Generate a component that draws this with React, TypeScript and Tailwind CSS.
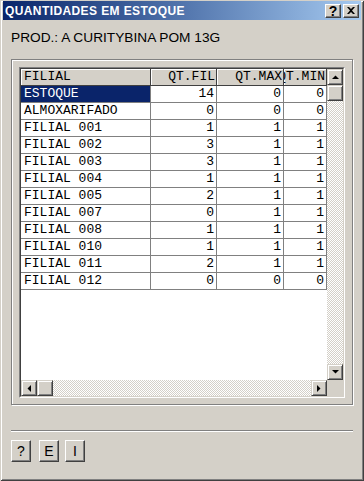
const rows: [string, number, number, number][] = [
  ["ESTOQUE", 14, 0, 0],
  ["ALMOXARIFADO", 0, 0, 0],
  ["FILIAL 001", 1, 1, 1],
  ["FILIAL 002", 3, 1, 1],
  ["FILIAL 003", 3, 1, 1],
  ["FILIAL 004", 1, 1, 1],
  ["FILIAL 005", 2, 1, 1],
  ["FILIAL 007", 0, 1, 1],
  ["FILIAL 008", 1, 1, 1],
  ["FILIAL 010", 1, 1, 1],
  ["FILIAL 011", 2, 1, 1],
  ["FILIAL 012", 0, 0, 0],
]

const raised =
  "bg-[#d4d0c8] border border-t-[#d4d0c8] border-l-[#d4d0c8] border-r-[#404040] border-b-[#404040] shadow-[inset_1px_1px_0_#fff,inset_-1px_-1px_0_#808080]"

const pushButton =
  "bg-[#d4d0c8] border border-t-white border-l-white border-r-[#404040] border-b-[#404040] shadow-[inset_-1px_-1px_0_#808080] flex items-center justify-center text-[14px] text-black"

const track = "bg-[repeating-conic-gradient(#d4d0c8_0_25%,#ffffff_0_50%)] bg-[length:2px_2px]"

function Arrow({ dir }: { dir: "up" | "down" | "left" | "right" }) {
  const pts = {
    up: "0,4 7,4 3.5,0.5",
    down: "0,0 7,0 3.5,3.5",
    left: "4,0 4,7 0.5,3.5",
    right: "0,0 0,7 3.5,3.5",
  }[dir]
  const vertical = dir === "up" || dir === "down"
  return (
    <svg width={ vertical ? 7 : 4 } height={ vertical ? 4 : 7 } viewBox={ vertical ? "0 0 7 4" : "0 0 4 7" }>
      <polygon points={ pts } fill="#000" />
    </svg>
  )
}

function ScrollBtn({ dir }: { dir: "up" | "down" | "left" | "right" }) {
  return (
    <div className={ `${ raised } w-4 h-4 shrink-0 flex items-center justify-center` }>
      <Arrow dir={ dir } />
    </div>
  )
}

export default function App() {
  return (
    <div className="w-[364px] h-[481px] bg-[#d4d0c8] pt-[1px] px-[3px] pb-[3px] flex flex-col font-['Liberation_Sans',Arial,sans-serif] shadow-[inset_1px_1px_0_#d4d0c8,inset_-1px_-1px_0_#404040,inset_2px_2px_0_#fff,inset_-2px_-2px_0_#808080]">
      {/* title bar */ }
      <div className="h-[19px] shrink-0 flex items-center bg-linear-to-r from-[#0a246a] to-[#a6caf0] pl-[2px] pr-[2px]">
        <span className="text-white font-bold text-[12px] tracking-[0.4px] leading-none">QUANTIDADES EM ESTOQUE</span>
        <div className="ml-auto flex gap-[2px]">
          <div className={ `${ pushButton } w-4 h-[14px] text-[11px] font-bold leading-none` }>?</div>
          <div className={ `${ pushButton } w-4 h-[14px]` }>
            <svg width="8" height="7" viewBox="0 0 8 7">
              <path d="M0 0h2l2 2 2-2h2L5 3.5 8 7H6L4 5 2 7H0l3-3.5z" fill="#000" />
            </svg>
          </div>
        </div>
      </div>

      <div className="mt-[10px] ml-[8px] text-[13.7px] leading-[16px] text-black">PROD.: A CURITYBINA POM 13G</div>

      {/* group box */ }
      <div className="mt-[13px] ml-[8px] w-[342px] h-[346px] border border-[#808080] shadow-[1px_1px_0_#fff,inset_1px_1px_0_#fff] pt-[7px] pl-[7px]">
        <div className="w-[326px] h-[331px] border border-t-[#808080] border-l-[#808080] border-r-white border-b-white">
          <div className="w-full h-full border border-t-[#404040] border-l-[#404040] border-r-[#d4d0c8] border-b-[#d4d0c8] flex flex-col font-['Liberation_Mono','Courier_New',monospace] text-[13px] leading-[16px] text-black">
            <div className="flex h-[311px]">
              <div className="w-[306px] bg-white flex flex-col overflow-hidden">
                <div className="flex h-[17px] shrink-0">
                  <div className="w-[130px] bg-[#d4d0c8] border-r border-b border-[#404040] shadow-[inset_1px_1px_0_#fff] pl-[3px] overflow-hidden whitespace-nowrap">FILIAL</div>
                  <div className="w-[66px] bg-[#d4d0c8] border-r border-b border-[#404040] shadow-[inset_1px_1px_0_#fff] pr-[1px] flex justify-end overflow-hidden whitespace-nowrap">QT.FIL</div>
                  <div className="w-[67px] bg-[#d4d0c8] border-r border-b border-[#404040] shadow-[inset_1px_1px_0_#fff] pr-[1px] flex justify-end overflow-hidden whitespace-nowrap">QT.MAX</div>
                  <div className="w-[43px] bg-[#d4d0c8] border-r border-b border-[#404040] shadow-[inset_1px_1px_0_#fff] pr-[1px] flex justify-end overflow-hidden whitespace-nowrap">QT.MIN</div>
                </div>
                { rows.map(([name, fil, max, min], i) => (
                  <div key={ name } className="flex h-[17px] shrink-0">
                    <div className={ `w-[130px] border-r border-b border-[#808080] pl-[3px] whitespace-nowrap ${ i === 0 ? "bg-[#0a246a] text-white" : "" }` }>{ name }</div>
                    <div className="w-[66px] border-r border-b border-[#808080] pr-[2px] text-right">{ fil }</div>
                    <div className="w-[67px] border-r border-b border-[#808080] pr-[2px] text-right">{ max }</div>
                    <div className="w-[43px] border-r border-b border-[#808080] pr-[2px] text-right">{ min }</div>
                  </div>
                )) }
              </div>
              <div className="w-4 flex flex-col">
                <ScrollBtn dir="up" />
                <div className={ `${ raised } w-4 h-4 shrink-0` } />
                <div className={ `flex-1 ${ track }` } />
                <ScrollBtn dir="down" />
              </div>
            </div>
            <div className="flex h-4">
              <div className="w-[306px] flex">
                <ScrollBtn dir="left" />
                <div className={ `${ raised } w-4 h-4 shrink-0` } />
                <div className={ `flex-1 ${ track }` } />
                <ScrollBtn dir="right" />
              </div>
              <div className="w-4 bg-[#d4d0c8]" />
            </div>
          </div>
        </div>
      </div>

      {/* separator */ }
      <div className="mt-[25px] ml-[8px] w-[342px] border-t border-[#808080] border-b border-b-white" />

      <div className="mt-[8px] ml-[8px] flex">
        <div className={ `${ pushButton } w-5 h-[22px]` }>?</div>
        <div className={ `${ pushButton } w-5 h-[22px] ml-[8px]` }>E</div>
        <div className={ `${ pushButton } w-5 h-[22px] ml-[6px]` }>I</div>
      </div>
    </div>
  )
}
